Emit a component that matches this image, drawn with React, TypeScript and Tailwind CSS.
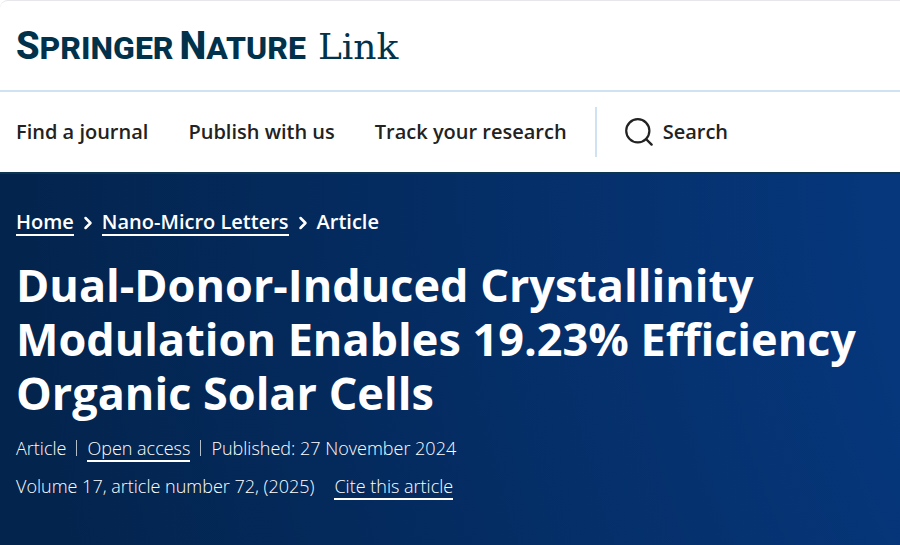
import React from 'react';
import { ChevronRight } from 'lucide-react';

const navItems = ['Find a journal', 'Publish with us', 'Track your research'];

const SearchIcon = () => (
  <svg width="28" height="28" viewBox="0 0 28 28" fill="none" stroke="currentColor" aria-hidden="true">
    <circle cx="12.8" cy="12.8" r="11.6" strokeWidth="2.2" />
    <path d="M21 21L26.6 26.6" strokeWidth="2.4" strokeLinecap="round" />
  </svg>
);

const Header: React.FC = () => (
  <header className="rounded-tl-lg border-t border-gray-200 bg-white">
    <div className="border-b-2 border-[#cfe2f3] px-4 pt-[25px] pb-[22px]">
      <a href="#" className="flex items-baseline gap-3 text-[#01324b]">
        <span className="flex items-baseline gap-1.5 font-['Roboto',sans-serif] text-[32px] leading-10 font-extrabold">
          <span><span className="text-[38px]">S</span>PRINGER</span>
          <span><span className="text-[38px]">N</span>ATURE</span>
        </span>
        <span className="font-['DejaVu_Serif',serif] text-[36px] leading-10">Link</span>
      </a>
    </div>
    <nav className="flex items-center border-b-2 border-[#0b3550] px-4 py-[15px] font-semibold text-[#222] text-[20px]">
      <ul className="flex gap-10">
        {navItems.map((item) => (
          <li key={item}>
            <a href="#">{item}</a>
          </li>
        ))}
      </ul>
      <a href="#" className="ml-7 flex h-[50px] items-center gap-2.5 border-l-2 border-[#cfe2f3] pl-7">
        <SearchIcon />
        Search
      </a>
    </nav>
  </header>
);

const Breadcrumbs: React.FC = () => (
  <nav aria-label="Breadcrumbs" className="font-semibold">
    <ol className="flex items-start text-[20px] leading-6">
      <li className="flex items-center">
        <a href="#" className="border-b-2 border-white">Home</a>
        <ChevronRight size={20} strokeWidth={3} className="mx-1" />
      </li>
      <li className="flex items-center">
        <a href="#" className="border-b-2 border-white">Nano-Micro Letters</a>
        <ChevronRight size={20} strokeWidth={3} className="mx-1" />
      </li>
      <li>Article</li>
    </ol>
  </nav>
);

export default function App() {
  return (
    <div className="flex min-h-screen flex-col bg-white font-['Open_Sans',sans-serif]">
      <Header />
      <main className="flex-1 bg-[radial-gradient(1600px_circle_at_180%_0,#06377d_45%,#03244d)] px-4 pt-9 pb-10 text-white">
        <Breadcrumbs />
        <h1 className="mt-[22px] text-[45px] leading-[54px] font-bold">
          Dual-Donor-Induced Crystallinity Modulation Enables 19.23% Efficiency Organic Solar Cells
        </h1>
        <ul className="mt-4 flex items-start text-[18px] leading-6 font-[350]">
          <li className="my-1 mr-2.5 border-r border-white/70 pr-2.5 leading-4">Article</li>
          <li className="mr-2.5"><a href="#" className="block border-b-2 border-white">Open access</a></li>
          <li className="my-1 border-l border-white/70 pl-2.5 leading-4">Published: 27 November 2024</li>
        </ul>
        <p className="mt-3 flex gap-5 text-[18px] leading-6 font-[350]">
          Volume 17, article number 72, (2025)
          <a href="#" className="border-b-2 border-white">Cite this article</a>
        </p>
      </main>
    </div>
  );
}
